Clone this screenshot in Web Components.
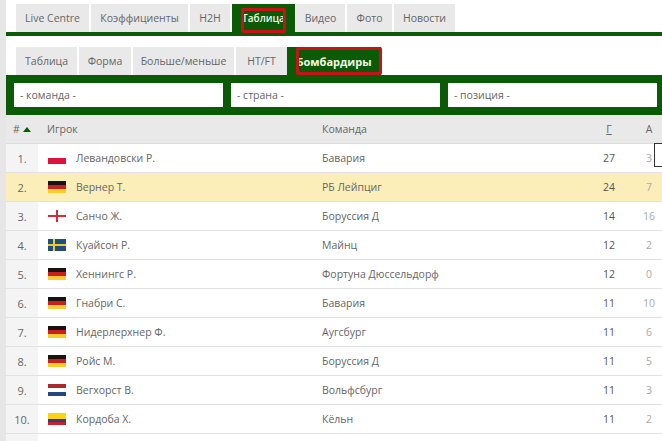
<!DOCTYPE html>
<html lang="ru">
<head>
<meta charset="utf-8">
<style>
  html, body { margin:0; padding:0; background:#fff; }
  body { width:662px; height:441px; overflow:hidden; font-family:"Open Sans","DejaVu Sans",sans-serif; }
</style>
</head>
<body>
<stats-page></stats-page>
<script>
const COLUMNS = '32px 38px 246px 265px 44px 31px';
const FLAGS = {
  pl: '<rect width="18" height="6" fill="#fff"/><rect y="6" width="18" height="6" fill="#dc143c"/>',
  de: '<rect width="18" height="4" fill="#1a1210"/><rect y="4" width="18" height="4" fill="#c9201c"/><rect y="8" width="18" height="4" fill="#fbcb2e"/>',
  en: '<rect width="18" height="12" fill="#fff"/><rect y="5" width="18" height="2" fill="#d8283c"/><rect x="8" width="2" height="12" fill="#d8283c"/>',
  se: '<rect width="18" height="12" fill="#1f4f7f"/><rect y="5" width="18" height="2" fill="#f0c832"/><rect x="5" width="2" height="12" fill="#f0c832"/>',
  nl: '<rect width="18" height="4" fill="#a82a30"/><rect y="4" width="18" height="4" fill="#fff"/><rect y="8" width="18" height="4" fill="#23477f"/>',
  co: '<rect width="18" height="6" fill="#fcd116"/><rect y="6" width="18" height="3" fill="#2b3f80"/><rect y="9" width="18" height="3" fill="#c8202f"/>'
};

class TabBar extends HTMLElement {
  connectedCallback() {
    const items = this.getAttribute('items').split('|');
    const active = Number(this.getAttribute('active'));
    const widths = this.getAttribute('widths').split(',');
    const bold = this.hasAttribute('bold');
    this.attachShadow({ mode: 'open' }).innerHTML = `
      <style>
        :host { display:block; }
        .tabs { display:flex; padding-left:16px; gap:2px; height:28px; }
        .tab { box-sizing:border-box; height:28px; background:#e9e9e9; color:#666; font-size:10.5px;
          display:flex; align-items:center; justify-content:center; white-space:nowrap; }
        .tab.on { background:#0b5a06; color:#f2fbe6; position:relative; font-weight:600; font-size:10px;
          margin-left:var(--active-before, 0); margin-right:var(--active-after, 0); }
        .tab.on.b { font-weight:700; font-size:11px; }
        .mark { position:absolute; top:var(--mark-top); bottom:var(--mark-bottom, 0); left:var(--mark-left); right:var(--mark-right);
          border:3px solid #c4141a; border-radius:2px; }
      </style>
      <div class="tabs">
        ${items.map((t, i) => `<div class="tab ${i === active ? 'on' : ''} ${bold ? 'b' : ''}" style="width:${widths[i]}px">${t}${i === active ? '<span class="mark"></span>' : ''}</div>`).join('')}
      </div>`;
  }
}
customElements.define('tab-bar', TabBar);

class FilterBar extends HTMLElement {
  connectedCallback() {
    this.attachShadow({ mode: 'open' }).innerHTML = `
      <style>
        :host { display:block; }
        .bar { background:#0b5a06; height:40px; box-sizing:border-box; padding:8px 5px 8px 8px; display:flex; gap:8px; }
        .sel { flex:1; background:#fff; color:#666; font-size:10.5px; display:flex; align-items:center; padding-left:6px; }
      </style>
      <div class="bar">
        <div class="sel">- команда -</div>
        <div class="sel">- страна -</div>
        <div class="sel">- позиция -</div>
      </div>`;
  }
}
customElements.define('filter-bar', FilterBar);

class PlayerRow extends HTMLElement {
  connectedCallback() {
    const a = (n) => this.getAttribute(n);
    const blank = !a('n');
    this.attachShadow({ mode: 'open' }).innerHTML = `
      <style>
        :host { display:block; }
        .row { display:grid; grid-template-columns:${COLUMNS}; height:28px; align-items:center;
          border-bottom:1px solid #e2e2e2; font-size:10.5px; color:#666; background:#fff; }
        :host([hl]) .row { background:#fbeeb8; }
        .n { height:100%; display:flex; align-items:center; justify-content:center; background:#f4f4f4; color:#666; font-size:11px; }
        :host([hl]) .n { background:transparent; }
        svg { display:block; margin-left:10px; }
        .g { text-align:center; color:#555; }
        .a { text-align:center; color:#aaa; padding-left:5px; }
      </style>
      <div class="row">
        <div class="n">${blank ? '' : a('n') + '.'}</div>
        ${blank ? '' : `
        <div><svg width="18" height="12" viewBox="0 0 18 12">${FLAGS[a('flag')]}</svg></div>
        <div>${a('name')}</div>
        <div>${a('team')}</div>
        <div class="g">${a('g')}</div>
        <div class="a">${a('as')}</div>`}
      </div>`;
  }
}
customElements.define('player-row', PlayerRow);

class StatsTable extends HTMLElement {
  connectedCallback() {
    this.attachShadow({ mode: 'open' }).innerHTML = `
      <style>
        :host { display:block; position:relative; }
        .head { display:grid; grid-template-columns:${COLUMNS}; height:28px; align-items:center;
          background:#e9e9e9; color:#666; font-size:10.5px; border-bottom:1px solid #dcdcdc; }
        .num { padding-left:7px; display:flex; align-items:center; gap:3px; }
        .num i { width:0; height:0; border:4px solid transparent; border-top:0; border-bottom:5px solid #0b5a06; }
        .player { padding-left:9px; white-space:nowrap; }
        .g { text-align:center; text-decoration:underline; }
        .a { text-align:center; padding-left:5px; }
        .note { position:absolute; right:-1px; top:28px; width:7px; height:22px; border:1px solid #333; background:#fff; }
      </style>
      <div class="head">
        <div class="num"># <i></i></div>
        <div class="player">Игрок</div>
        <div></div>
        <div>Команда</div>
        <div class="g">Г</div>
        <div class="a">А</div>
      </div>
      <slot></slot>
      <div class="note"></div>`;
  }
}
customElements.define('stats-table', StatsTable);

class StatsPage extends HTMLElement {
  connectedCallback() {
    const rows = [
      [1,'pl','Левандовски Р.','Бавария',27,3],
      [2,'de','Вернер Т.','РБ Лейпциг',24,7],
      [3,'en','Санчо Ж.','Боруссия Д',14,16],
      [4,'se','Куайсон Р.','Майнц',12,2],
      [5,'de','Хеннингс Р.','Фортуна Дюссельдорф',12,0],
      [6,'de','Гнабри С.','Бавария',11,10],
      [7,'de','Нидерлерхнер Ф.','Аугсбург',11,6],
      [8,'de','Ройс М.','Боруссия Д',11,5],
      [9,'nl','Вегхорст В.','Вольфсбург',11,3],
      [10,'co','Кордоба Х.','Кёльн',11,2]
    ];
    this.attachShadow({ mode: 'open' }).innerHTML = `
      <style>
        :host { display:block; height:441px; background:#fff; }
        .wrap { margin-left:6px; box-shadow:-6px 0 0 #e6e6e6; height:441px; padding-top:4px; box-sizing:border-box; background:#fff; overflow:hidden; }
        .top { margin-left:-6px; --mark-top:4px; --mark-bottom:-1px; --mark-left:9px; --mark-right:9px; --active-after:-1px; }
        .rule { height:4px; background:#0b5a06; }
        .sub { margin:11px 0 0 -6px; --mark-top:0px; --mark-left:9px; --mark-right:-1px; --active-before:-2px; }
      </style>
      <div class="wrap">
        <tab-bar class="top" items="Live Centre|Коэффициенты|H2H|Таблица|Видео|Фото|Новости" widths="73,97,40,63,49,45,61" active="3"></tab-bar>
        <div class="rule"></div>
        <tab-bar class="sub" bold items="Таблица|Форма|Больше/меньше|HT/FT|Бомбардиры" widths="61,52,101,51,94" active="4"></tab-bar>
        <filter-bar></filter-bar>
        <stats-table>
          ${rows.map((r, i) => `<player-row n="${r[0]}" flag="${r[1]}" name="${r[2]}" team="${r[3]}" g="${r[4]}" as="${r[5]}" ${i === 1 ? 'hl' : ''}></player-row>`).join('')}
          <player-row></player-row>
        </stats-table>
      </div>`;
  }
}
customElements.define('stats-page', StatsPage);
</script>
</body>
</html>
